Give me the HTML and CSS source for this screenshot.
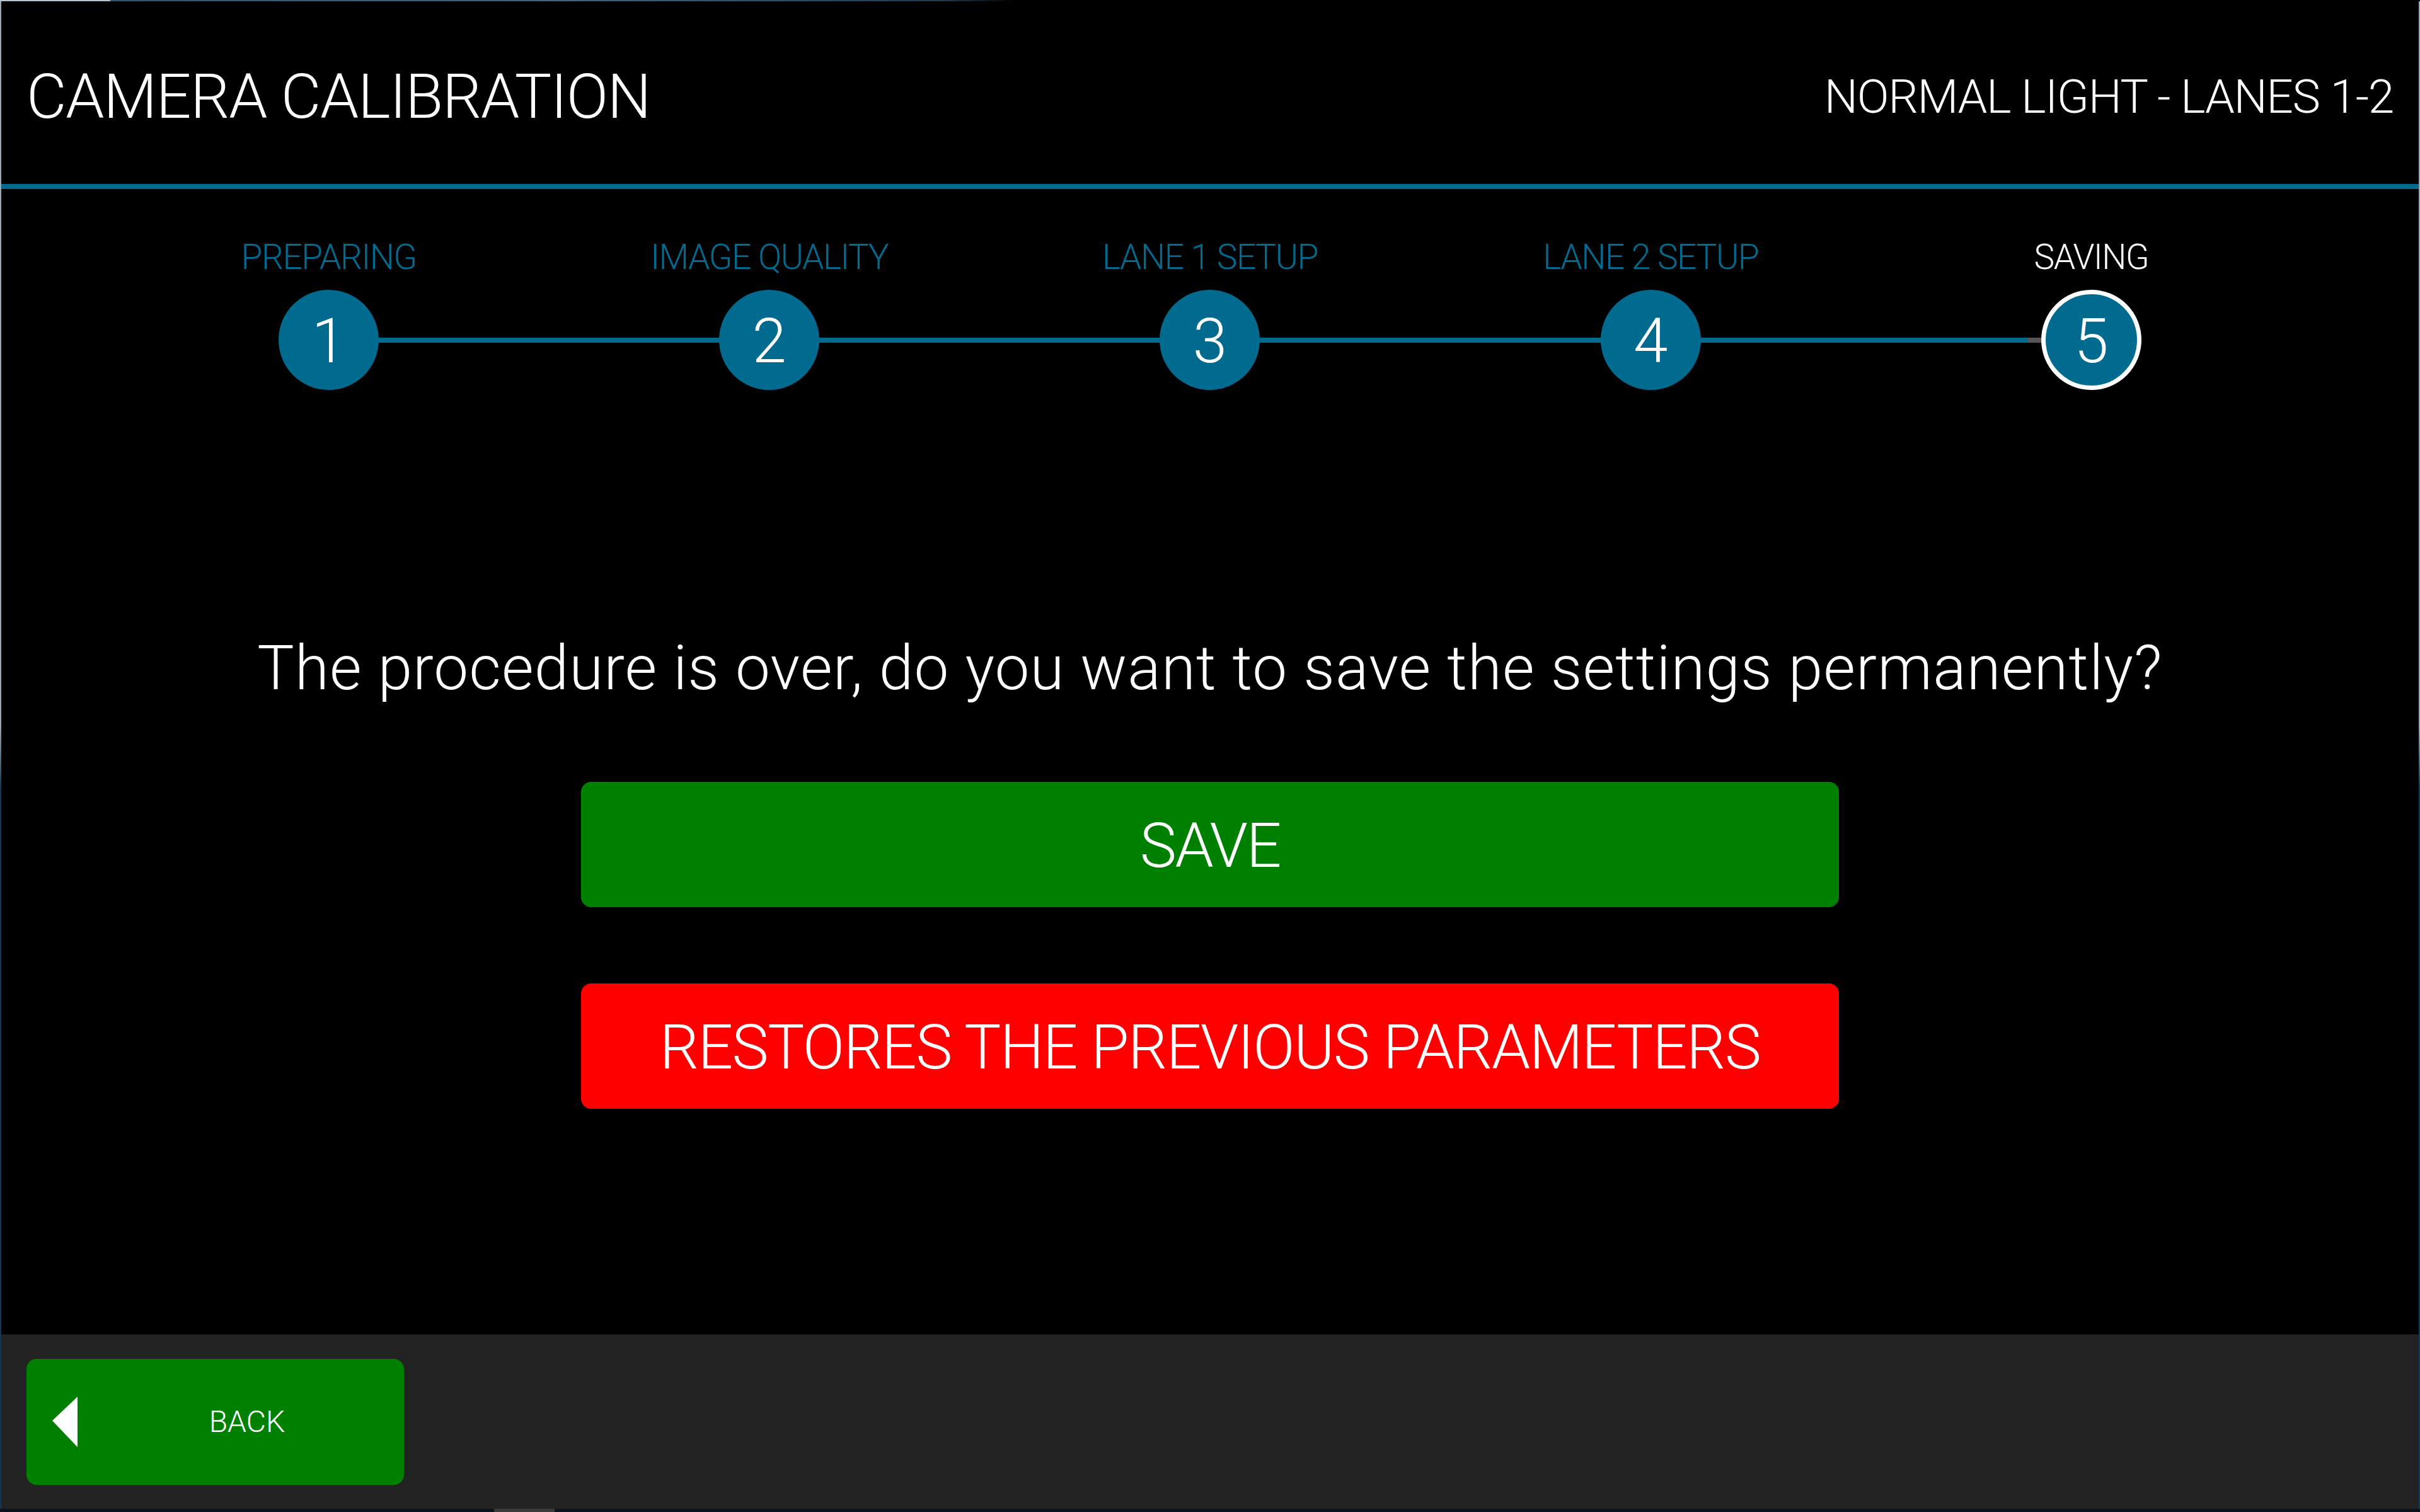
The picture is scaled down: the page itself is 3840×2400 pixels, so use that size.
FILE: index.html
```html
<!DOCTYPE html>
<html lang="en">
<head>
<meta charset="utf-8">
<title>Camera Calibration</title>
<link rel="stylesheet" href="styles.css">
</head>
<body>
<div class="desktop">
  <div class="top-strip"></div>
  <div class="window">
    <header class="header">
      <h1 class="title">CAMERA CALIBRATION</h1>
      <div class="subtitle">NORMAL LIGHT - LANES 1-2</div>
    </header>
    <main class="main">
      <div class="steps">
        <div class="track"></div>
        <div class="step">
          <div class="step-label">PREPARING</div>
          <div class="step-circle">1</div>
        </div>
        <div class="step">
          <div class="step-label">IMAGE QUALITY</div>
          <div class="step-circle">2</div>
        </div>
        <div class="step">
          <div class="step-label">LANE 1 SETUP</div>
          <div class="step-circle">3</div>
        </div>
        <div class="step">
          <div class="step-label">LANE 2 SETUP</div>
          <div class="step-circle">4</div>
        </div>
        <div class="step step-active">
          <div class="step-label">SAVING</div>
          <div class="step-circle">5</div>
        </div>
      </div>
      <p class="question">The procedure is over, do you want to save the settings permanently?</p>
      <button class="btn btn-save">SAVE</button>
      <button class="btn btn-restore">RESTORES THE PREVIOUS PARAMETERS</button>
    </main>
    <footer class="footer">
      <button class="back">
        <svg class="back-icon" width="40" height="80" viewBox="0 0 40 80"><polygon points="40,0 40,80 0,38" fill="#ffffff"/></svg>
        <span class="back-label">BACK</span>
      </button>
    </footer>
  </div>
  <div class="bottom-strip"><div class="bottom-block"></div></div>
</div>
</body>
</html>
```
FILE: styles.css
```css
html, body {
  margin: 0;
  padding: 0;
  background: #000;
}
body {
  font-family: Roboto, "Liberation Sans", sans-serif;
  color: #fff;
}
.desktop {
  width: 3840px;
  height: 2400px;
  display: flex;
  flex-direction: column;
  background: #0a1420;
  overflow: hidden;
}
.top-strip {
  height: 2px;
  flex: none;
  background: linear-gradient(to right, #b8c4d0 0, #b8c4d0 174px, #2b5677 176px, #3a6688 900px, #1c3a52 1500px, #000 1610px, #000 100%);
}
.window {
  flex: 1;
  display: flex;
  flex-direction: column;
  background: #000;
  border-left: 2px solid #0e3550;
  border-right: 2px solid #0b1a26;
  border-image: linear-gradient(to bottom, #9aa6b2 0, #9aa6b2 1150px, #0e3a58 1250px, #0e3a58 100%) 1;
  border-top: 0;
  border-bottom: 0;
}
.header {
  height: 278px;
  padding: 12px 40px 0 40px;
  display: flex;
  align-items: center;
  justify-content: space-between;
  border-bottom: 8px solid #006a8f;
  flex: none;
}
.title {
  margin: 0;
  font-size: 98px;
  font-weight: 300;
  line-height: 115px;
  letter-spacing: -1.3px;
}
.subtitle {
  font-size: 75px;
  font-weight: 300;
  line-height: 88px;
  letter-spacing: -1.4px;
}
.main {
  flex: 1;
  display: flex;
  flex-direction: column;
  align-items: center;
}
.steps {
  position: relative;
  align-self: stretch;
  display: grid;
  grid-template-columns: repeat(5, 1fr);
  padding: 76px 170px 0;
}
.track {
  position: absolute;
  top: 236px;
  left: calc(170px + (100% - 340px) / 10);
  right: calc(170px + (100% - 340px) / 10);
  height: 8px;
  background: linear-gradient(to right, #006a8f 0, #006a8f calc(100% - 100px), #555 calc(100% - 100px), #555 100%);
}
.step {
  display: flex;
  flex-direction: column;
  align-items: center;
  position: relative;
}
.step-label {
  font-size: 55px;
  font-weight: 300;
  line-height: 64px;
  letter-spacing: -1.4px;
  color: #006a8f;
  white-space: nowrap;
}
.step-circle {
  margin-top: 20px;
  width: 159px;
  height: 159px;
  box-sizing: border-box;
  border-radius: 50%;
  background: #006a8f;
  display: flex;
  align-items: center;
  justify-content: center;
  font-size: 98px;
  font-weight: 300;
  line-height: 1;
  padding-top: 4px;
  color: #fff;
}
.step-active .step-label {
  color: #fff;
}
.step-active .step-circle {
  border: 7px solid #fff;
}
.question {
  margin: 384px 0 0;
  font-size: 98px;
  font-weight: 300;
  line-height: 115px;
  letter-spacing: 1.1px;
  text-align: center;
}
.btn {
  width: 1996px;
  height: 199px;
  border: 0;
  border-radius: 16px;
  color: #fff;
  font-family: Roboto, "Liberation Sans", sans-serif;
  font-size: 98px;
  font-weight: 300;
  padding: 4px 0 0;
  display: flex;
  align-items: center;
  justify-content: center;
}
.btn-save {
  margin-top: 123px;
  background: #008000;
  letter-spacing: -2.2px;
}
.btn-restore {
  margin-top: 121px;
  background: #ff0000;
  letter-spacing: -1.6px;
}
.footer {
  height: 277px;
  flex: none;
  background: #222222;
  display: flex;
  align-items: center;
  padding-left: 40px;
}
.back {
  width: 599px;
  height: 200px;
  border: 0;
  border-radius: 16px;
  background: #008000;
  display: flex;
  align-items: center;
  padding: 0 0 0 41px;
  color: #fff;
  font-family: Roboto, "Liberation Sans", sans-serif;
}
.back-icon {
  flex: none;
  display: block;
}
.back-label {
  flex: 1;
  margin-left: 20px;
  text-align: center;
  font-size: 48px;
  font-weight: 300;
  line-height: 56px;
}
.bottom-strip {
  height: 5px;
  flex: none;
  background: #0b141d;
  position: relative;
}
.bottom-block {
  margin-left: 784px;
  width: 96px;
  height: 5px;
  background: #3a3b3e;
}
```
